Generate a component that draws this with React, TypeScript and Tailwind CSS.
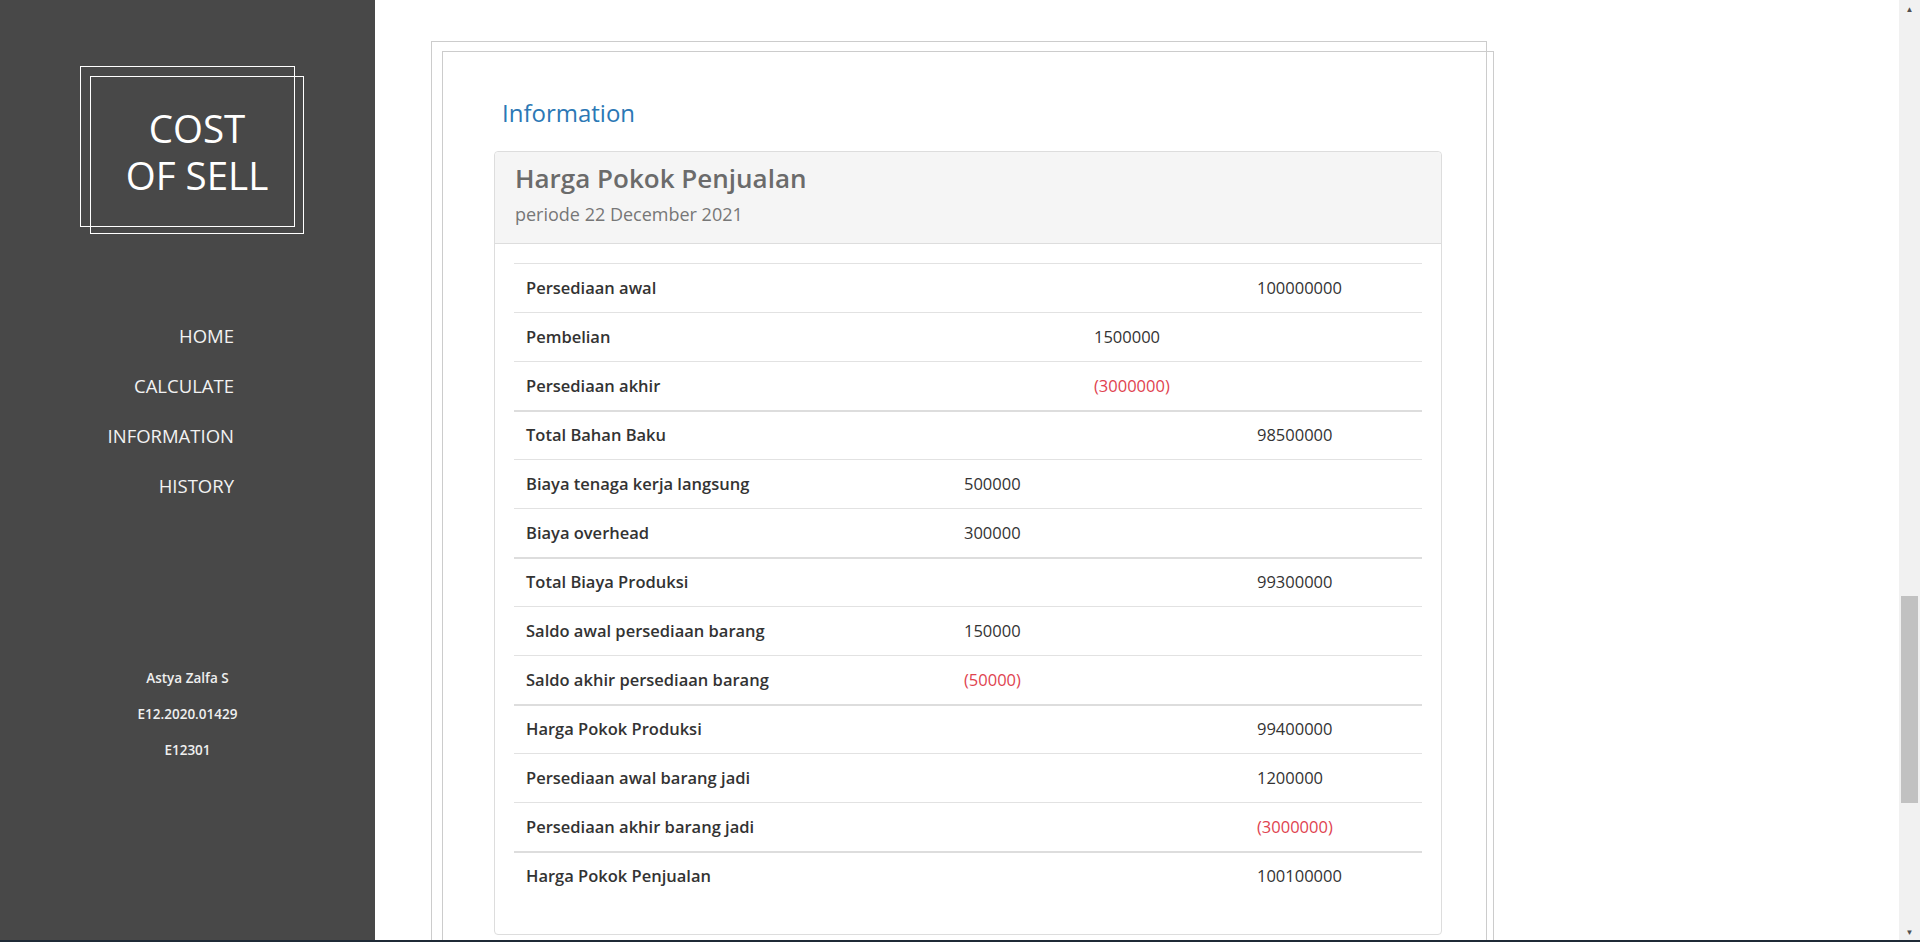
import React from "react";

type Row = {
  label: string;
  col: 2 | 3 | 4;
  value: string;
  negative?: boolean;
};

// groups are separated by a thicker rule, like stacked tbody's
const groups: Row[][] = [
  [
    { label: "Persediaan awal", col: 4, value: "100000000" },
    { label: "Pembelian", col: 3, value: "1500000" },
    { label: "Persediaan akhir", col: 3, value: "(3000000)", negative: true },
  ],
  [
    { label: "Total Bahan Baku", col: 4, value: "98500000" },
    { label: "Biaya tenaga kerja langsung", col: 2, value: "500000" },
    { label: "Biaya overhead", col: 2, value: "300000" },
  ],
  [
    { label: "Total Biaya Produksi", col: 4, value: "99300000" },
    { label: "Saldo awal persediaan barang", col: 2, value: "150000" },
    { label: "Saldo akhir persediaan barang", col: 2, value: "(50000)", negative: true },
  ],
  [
    { label: "Harga Pokok Produksi", col: 4, value: "99400000" },
    { label: "Persediaan awal barang jadi", col: 4, value: "1200000" },
    { label: "Persediaan akhir barang jadi", col: 4, value: "(3000000)", negative: true },
  ],
  [{ label: "Harga Pokok Penjualan", col: 4, value: "100100000" }],
];

const navItems = ["HOME", "CALCULATE", "INFORMATION", "HISTORY"];

function Sidebar() {
  return (
    <aside className="w-[375px] shrink-0 bg-[#484848] text-white flex flex-col">
      {/* Logo */}
      <div className="pl-[90px] pt-[76px]">
        <div className="relative w-[214px] h-[158px] border border-white pt-[28px] text-center">
          <div className="absolute left-[-11px] top-[-11px] w-[215px] h-[161px] border border-white" />
          <p className="text-[38.5px] leading-[47.3px] text-white">
            COST
            <br />
            OF SELL
          </p>
        </div>
      </div>

      {/* Nav */}
      <nav className="mt-[89px] w-[234px] flex flex-col items-end gap-[25px]">
        {navItems.map((item) => (
          <a key={item} href="#" className="text-[18.5px] leading-[25px] text-[#f2f2f2]">
            {item}
          </a>
        ))}
      </nav>

      {/* Student info */}
      <div className="mt-[171px] flex flex-col items-center gap-[17px] text-[13.5px] leading-[19px] font-semibold text-[#efefef]">
        <p>Astya Zalfa S</p>
        <p>E12.2020.01429</p>
        <p>E12301</p>
      </div>
    </aside>
  );
}

function CostTable() {
  return (
    <div className="w-[908px]">
      {groups.map((group, gi) =>
        group.map((row, ri) => (
          <div
            key={row.label}
            className={`grid grid-cols-[438px_130px_163px_177px] items-center h-[49px] text-[16.5px] text-[#333] ${
              ri === 0 && gi > 0 ? "border-t-2 border-[#dddddd]" : "border-t border-[#e2e2e2]"
            }`}
          >
            <div className="pl-3 font-semibold">{row.label}</div>
            {[2, 3, 4].map((c) => (
              <div key={c} className={`pl-3 ${row.negative ? "text-[#e0434f]" : ""}`}>
                {row.col === c ? row.value : ""}
              </div>
            ))}
          </div>
        ))
      )}
    </div>
  );
}

function Scrollbar() {
  return (
    <div className="w-[21px] shrink-0 bg-[#f1f1f1] flex flex-col items-center">
      <div className="h-[17px] flex items-center justify-center text-[8px] text-[#505050]">▲</div>
      <div className="mt-[579px] w-[17px] h-[207px] bg-[#c1c1c1]" />
      <div className="flex-1" />
      <div className="h-[17px] flex items-center justify-center text-[8px] text-[#505050]">▼</div>
    </div>
  );
}

export default function App() {
  return (
    <div className="w-full h-[942px] overflow-hidden flex flex-col" style={{ fontFamily: '"Open Sans", "Noto Sans", sans-serif' }}>
      <div className="flex h-[940px]">
        <Sidebar />

        {/* Main content */}
        <main className="flex-1 bg-white pl-[56px] pt-[41px] overflow-hidden">
          {/* outer decorative frame */}
          <div className="w-[1056px] h-[910px] border border-b-0 border-[#cccccc] pl-[10px] pt-[9px]">
            {/* inner frame */}
            <div className="w-[1052px] h-[900px] border border-b-0 border-[#cccccc] pl-[51px] pt-[48px]">
              <h3 className="ml-2 text-[24px] leading-[26.4px] text-[#2b78b5]">Information</h3>

              <div className="mt-[25px] w-[948px] border border-[#dddddd] rounded-[4px]">
                <div className="bg-[#f5f5f5] border-b border-[#dddddd] rounded-t-[4px] px-[20px] pt-[12px] pb-[15px]">
                  <h2 className="text-[26px] leading-[28.6px] font-semibold text-[#6b6b6b]">Harga Pokok Penjualan</h2>
                  <p className="mt-[8px] text-[18px] leading-[27px] text-[#777]">periode 22 December 2021</p>
                </div>
                <div className="px-[19px] pt-[19px] pb-[34px]">
                  <CostTable />
                </div>
              </div>
            </div>
          </div>
        </main>

        <Scrollbar />
      </div>
      <div className="h-[2px] bg-[#1f2a36]" />
    </div>
  );
}
